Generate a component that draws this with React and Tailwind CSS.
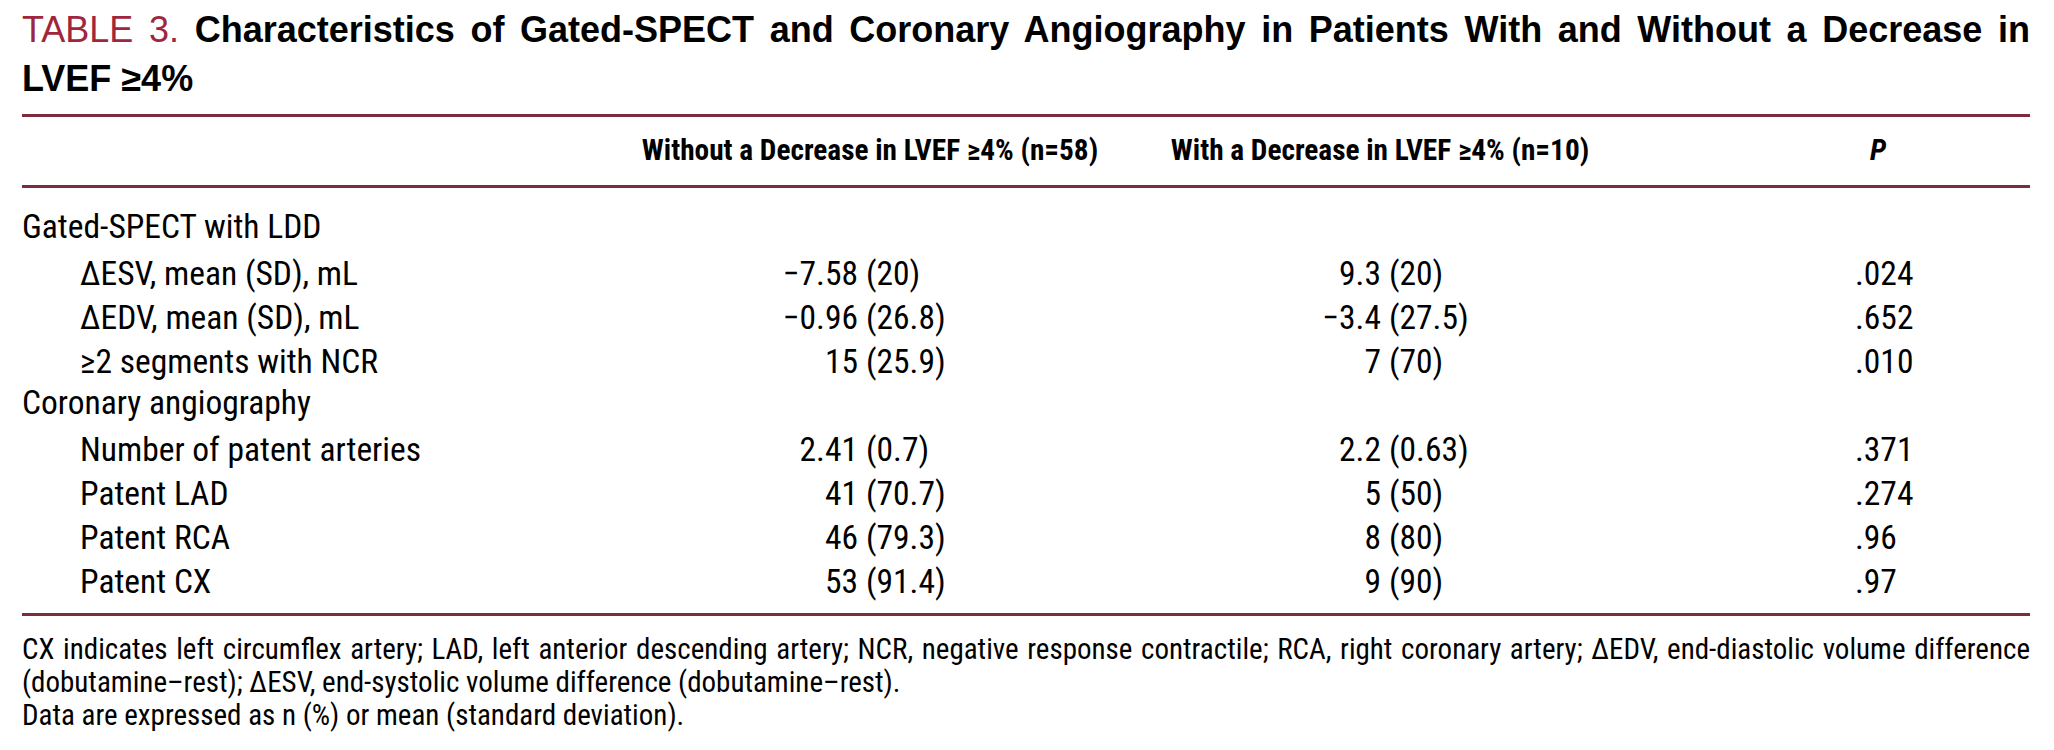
import React from 'react';

const groups = [
    {
        title: 'Gated-SPECT with LDD',
        rows: [
            { label: '\u0394ESV, mean (SD), mL', a: ['\u22127.58', '(20)'], b: ['9.3', '(20)'], p: '.024' },
            { label: '\u0394EDV, mean (SD), mL', a: ['\u22120.96', '(26.8)'], b: ['\u22123.4', '(27.5)'], p: '.652' },
            { label: '\u22652 segments with NCR', a: ['15', '(25.9)'], b: ['7', '(70)'], p: '.010' },
        ],
    },
    {
        title: 'Coronary angiography',
        rows: [
            { label: 'Number of patent arteries', a: ['2.41', '(0.7)'], b: ['2.2', '(0.63)'], p: '.371' },
            { label: 'Patent LAD', a: ['41', '(70.7)'], b: ['5', '(50)'], p: '.274' },
            { label: 'Patent RCA', a: ['46', '(79.3)'], b: ['8', '(80)'], p: '.96' },
            { label: 'Patent CX', a: ['53', '(91.4)'], b: ['9', '(90)'], p: '.97' },
        ],
    },
];

const Rule = () => <div className="h-[3px] bg-[#7b2d3d]" />;

const Value = ({ v, w }) => (
    <div className="flex">
        <span className={`${w} pr-[8px] text-right`}>{v[0]}</span>
        <span>{v[1]}</span>
    </div>
);

export default function App() {
    return (
        <div className="bg-white text-black px-[22px] pr-[24px] pt-[5px] pb-[20px] min-h-[750px]">
            <h1 className="font-['Liberation_Sans',Arial,sans-serif] text-[36px] leading-[49px] font-bold">
                <div className="text-justify [text-align-last:justify]">
                    <span className="font-normal text-[#a0263d]">TABLE 3.</span> Characteristics of Gated-SPECT and Coronary Angiography in Patients With and Without a Decrease in
                </div>
                <div>LVEF {'\u2265'}4%</div>
            </h1>

            <div className="mt-[11px] font-['Roboto_Condensed','DejaVu_Sans_Condensed','Liberation_Sans',sans-serif]">
                <Rule />
                <div className="grid grid-cols-[598px_500px_520px_1fr] h-[68px] items-center font-bold text-[29.3px]">
                    <div />
                    <div className="text-center whitespace-nowrap">Without a Decrease in LVEF {'\u2265'}4% (n=58)</div>
                    <div className="text-center whitespace-nowrap">With a Decrease in LVEF {'\u2265'}4% (n=10)</div>
                    <div className="pl-[230px] italic">P</div>
                </div>
                <Rule />

                <div className="pt-[17px] pb-[12px] text-[33.5px]">
                    {groups.map((g) => (
                        <React.Fragment key={g.title}>
                            <div className="h-[44px] flex items-center">{g.title}</div>
                            {g.rows.map((r) => (
                                <div key={r.label} className="grid grid-cols-[598px_500px_520px_1fr] h-[44px] items-center">
                                    <div className="pl-[58px]">{r.label}</div>
                                    <Value v={r.a} w="w-[246px]" />
                                    <Value v={r.b} w="w-[269px]" />
                                    <div className="pl-[215px]">{r.p}</div>
                                </div>
                            ))}
                        </React.Fragment>
                    ))}
                </div>
                <Rule />

                <div className="pt-[17px] text-[29px] leading-[33px]">
                    <p className="text-justify [text-align-last:justify]">
                        CX indicates left circumflex artery; LAD, left anterior descending artery; NCR, negative response contractile; RCA, right coronary artery; {'\u0394'}EDV, end-diastolic volume difference
                    </p>
                    <p>
                        (dobutamine{'\u2013'}rest); {'\u0394'}ESV, end-systolic volume difference (dobutamine{'\u2013'}rest).
                    </p>
                    <p>Data are expressed as n (%) or mean (standard deviation).</p>
                </div>
            </div>
        </div>
    );
}
